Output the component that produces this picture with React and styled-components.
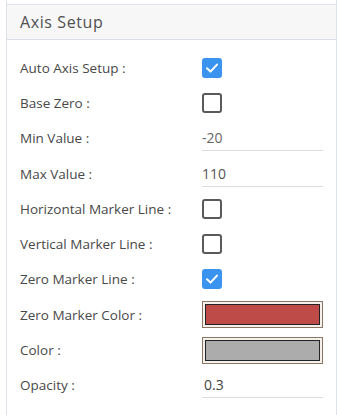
import React from "react";
import styled, { createGlobalStyle } from "styled-components";

const Global = createGlobalStyle`
  html, body { margin: 0; padding: 0; background: #ffffff; }
  body { font-family: "Open Sans", "Noto Sans", sans-serif; }
`;

const Panel = styled.div`
  margin-left: 6px;
  border-left: 1px solid #dde3e8;
  border-right: 1px solid #dde3e8;
  padding-top: 4px;
  min-height: 415px;
  box-sizing: border-box;
`;

const Header = styled.div`
  height: 36px;
  box-sizing: border-box;
  border-top: 1px solid #dde3e8;
  border-bottom: 1px solid #d9dfe4;
  background: #f7f7f7;
  display: flex;
  align-items: center;
  padding-left: 13px;
  font-size: 16px;
  letter-spacing: 0.6px;
  color: #505050;
`;

const Body = styled.div`
  padding: 10px 0 0 13px;
  display: flex;
  flex-direction: column;
`;

const Row = styled.div`
  height: 35.3px;
  display: grid;
  grid-template-columns: 182px 121px;
  align-items: center;
`;

const Label = styled.div`
  font-size: 13.5px;
  color: #484848;
  white-space: nowrap;
`;

const Box = styled.div`
  width: 20px;
  height: 20px;
  box-sizing: border-box;
  border-radius: 3px;
  border: 2px solid ${(p) => (p.checked ? "#3a93ee" : "#5a5a5a")};
  background: ${(p) => (p.checked ? "#3a93ee" : "#fff")};
  display: flex;
  align-items: center;
  justify-content: center;
`;

const Input = styled.div`
  height: 26px;
  margin-top: 4px;
  border-bottom: 1px solid #dcdcdc;
  font-size: 14px;
  color: ${(p) => p.color || "#555"};
  display: flex;
  align-items: center;
  padding-left: ${(p) => p.pad || 0}px;
  box-sizing: border-box;
  position: relative;
  top: -2px;
`;

const Swatch = styled.div`
  height: 27px;
  box-sizing: border-box;
  border: 1px solid #8c7663;
  background: #f4f0ec;
  padding: 2px 2px;
  display: flex;
`;

const SwatchFill = styled.div`
  flex: 1;
  border: 1px solid #222;
  background: ${(p) => p.fill};
`;

const Check = ({ checked }) => (
  <Box checked={checked}>
    {checked && (
      <svg width="14" height="14" viewBox="0 0 14 14">
        <path d="M2 7.3 L5.5 10.6 L12 3.6" fill="none" stroke="#fff" strokeWidth="2" strokeLinecap="round" strokeLinejoin="round" />
      </svg>
    )}
  </Box>
);

const rows = [
  { label: "Auto Axis Setup :", type: "check", checked: true },
  { label: "Base Zero :", type: "check", checked: false },
  { label: "Min Value :", type: "input", value: "-20", color: "#666" },
  { label: "Max Value :", type: "input", value: "110", color: "#555" },
  { label: "Horizontal Marker Line :", type: "check", checked: false },
  { label: "Vertical Marker Line :", type: "check", checked: false },
  { label: "Zero Marker Line :", type: "check", checked: true },
  { label: "Zero Marker Color :", type: "color", fill: "#be4b48" },
  { label: "Color :", type: "color", fill: "#acacac" },
  { label: "Opacity :", type: "input", value: "0.3", color: "#444", pad: 2 },
];

export default function App() {
  return (
    <>
      <Global />
      <Panel>
        <Header>Axis Setup</Header>
        <Body>
          {rows.map((r) => (
            <Row key={r.label}>
              <Label>{r.label}</Label>
              {r.type === "check" && <Check checked={r.checked} />}
              {r.type === "input" && (
                <Input color={r.color} pad={r.pad}>{r.value}</Input>
              )}
              {r.type === "color" && (
                <Swatch>
                  <SwatchFill fill={r.fill} />
                </Swatch>
              )}
            </Row>
          ))}
        </Body>
      </Panel>
    </>
  );
}
